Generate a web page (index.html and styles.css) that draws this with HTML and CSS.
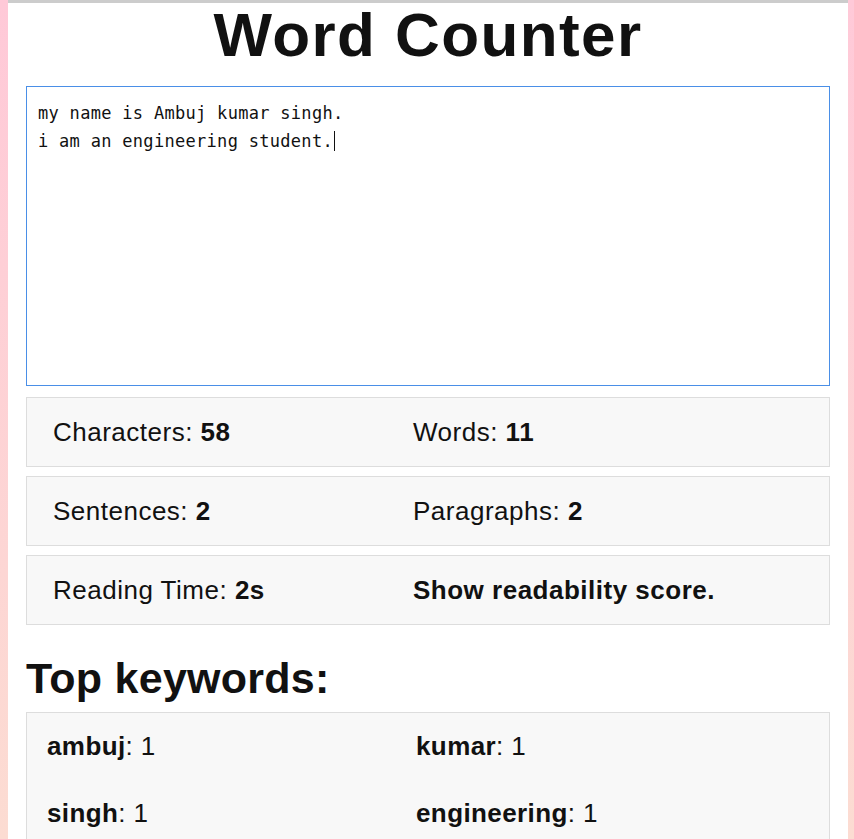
FILE: index.html
```html
<!DOCTYPE html>
<html lang="en">
<head>
<meta charset="utf-8">
<title>Word Counter</title>
<link rel="stylesheet" href="styles.css">
</head>
<body>
<div class="page">
  <h1 class="title">Word Counter</h1>
  <div class="editor"><div class="line">my name is Ambuj kumar singh.</div><div class="line">i am an engineering student.<span class="caret"></span></div></div>
  <div class="stat-box">
    <div class="stat">Characters: <b>58</b></div>
    <div class="stat">Words: <b>11</b></div>
  </div>
  <div class="stat-box">
    <div class="stat">Sentences: <b>2</b></div>
    <div class="stat">Paragraphs: <b>2</b></div>
  </div>
  <div class="stat-box">
    <div class="stat">Reading Time: <b>2s</b></div>
    <div class="stat"><b>Show readability score.</b></div>
  </div>
  <h2 class="subtitle">Top keywords:</h2>
  <div class="keywords">
    <div class="kw"><b>ambuj</b>: 1</div>
    <div class="kw"><b>kumar</b>: 1</div>
    <div class="kw"><b>singh</b>: 1</div>
    <div class="kw"><b>engineering</b>: 1</div>
  </div>
</div>
</body>
</html>
```
FILE: styles.css
```css
html, body {
  margin: 0;
  padding: 0;
  height: 100%;
}
body {
  background: linear-gradient(to bottom, #ffc9d8, #fcdcd2);
  font-family: "Liberation Sans", Arial, sans-serif;
  color: #111;
  overflow: hidden;
}
.page {
  box-sizing: border-box;
  width: 840px;
  margin-left: 8px;
  min-height: 100%;
  background: #fff;
  border-top: 3px solid #cccccc;
  padding: 0 18px;
}
.title {
  margin: 0;
  margin-top: -4px;
  font-size: 62px;
  line-height: 71px;
  font-weight: 700;
  letter-spacing: 1.4px;
  text-align: center;
}
.editor {
  box-sizing: border-box;
  height: 300px;
  margin-top: 16px;
  border: 1px solid #4a8fe7;
  padding: 12px 11px;
  font-family: "DejaVu Sans Mono", "Liberation Mono", monospace;
  font-size: 17px;
  line-height: 28px;
  letter-spacing: 0.3px;
  color: #111;
}
.caret {
  display: inline-block;
  width: 1px;
  height: 20px;
  background: #111;
  vertical-align: -4px;
  margin-left: 1px;
}
.stat-box {
  box-sizing: border-box;
  height: 70px;
  margin-top: 11px;
  background: #f8f8f8;
  border: 1px solid #dddddd;
  display: grid;
  grid-template-columns: 360px 1fr;
  align-items: center;
  padding-left: 26px;
  font-size: 26px;
  letter-spacing: 0.5px;
}
.stat-box + .stat-box {
  margin-top: 9px;
}
.subtitle {
  margin: 28px 0 0;
  font-size: 43px;
  line-height: 50px;
  font-weight: 700;
  letter-spacing: 0.25px;
}
.keywords {
  box-sizing: border-box;
  margin-top: 9px;
  background: #f8f8f8;
  border: 1px solid #dddddd;
  display: grid;
  grid-template-columns: 369px 1fr;
  grid-auto-rows: 67px;
  align-items: center;
  padding: 0 20px;
  font-size: 26px;
  letter-spacing: 0.4px;
  height: 200px;
}
```
